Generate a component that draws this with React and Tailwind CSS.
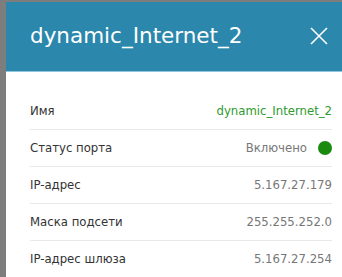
export default function App() {
  const rows = [
    { label: "Имя", value: "dynamic_Internet_2", green: true },
    { label: "Статус порта", value: "Включено", dot: true },
    { label: "IP-адрес", value: "5.167.27.179" },
    { label: "Маска подсети", value: "255.255.252.0" },
    { label: "IP-адрес шлюза", value: "5.167.27.254" },
  ];

  return (
    <div className="w-[342px] h-[277px] overflow-hidden bg-[#7d7d7d] pl-[6px] pt-[2px] font-['DejaVu_Sans',sans-serif]">
      <div className="h-full bg-white flex flex-col">
        {/* Header */}
        <div className="h-[70px] shrink-0 bg-[#2b87ac] border-b border-[#8fc6dc] flex items-center justify-between pl-[24px] pr-[12px]">
          <h2 className="text-[21.5px] text-white leading-none pb-[1px]">dynamic_Internet_2</h2>
          <button className="w-[22px] h-[22px] flex items-center justify-center mb-[2px]">
            <svg width="20" height="20" viewBox="0 0 20 20" fill="none" stroke="white" strokeWidth="1.6">
              <path d="M2 2 L18 18 M18 2 L2 18" />
            </svg>
          </button>
        </div>

        {/* Body */}
        <div className="pt-[21px] pl-[24px] pr-[10px] font-stretch-semi-condensed">
          {rows.map((r) => (
            <div
              key={r.label}
              className="h-[37px] border-b border-[#e9e9e9] flex items-center justify-between"
            >
              <span className="text-[13px] text-[#333333]">{r.label}</span>
              <span className="flex items-center gap-[11px]">
                <span className={`text-[13px] ${r.green ? "text-[#2f9a2f]" : "text-[#777777]"}`}>
                  {r.value}
                </span>
                {r.dot && <span className="w-[14px] h-[14px] rounded-full bg-[#1a8a0f]" />}
              </span>
            </div>
          ))}
        </div>
      </div>
    </div>
  );
}
